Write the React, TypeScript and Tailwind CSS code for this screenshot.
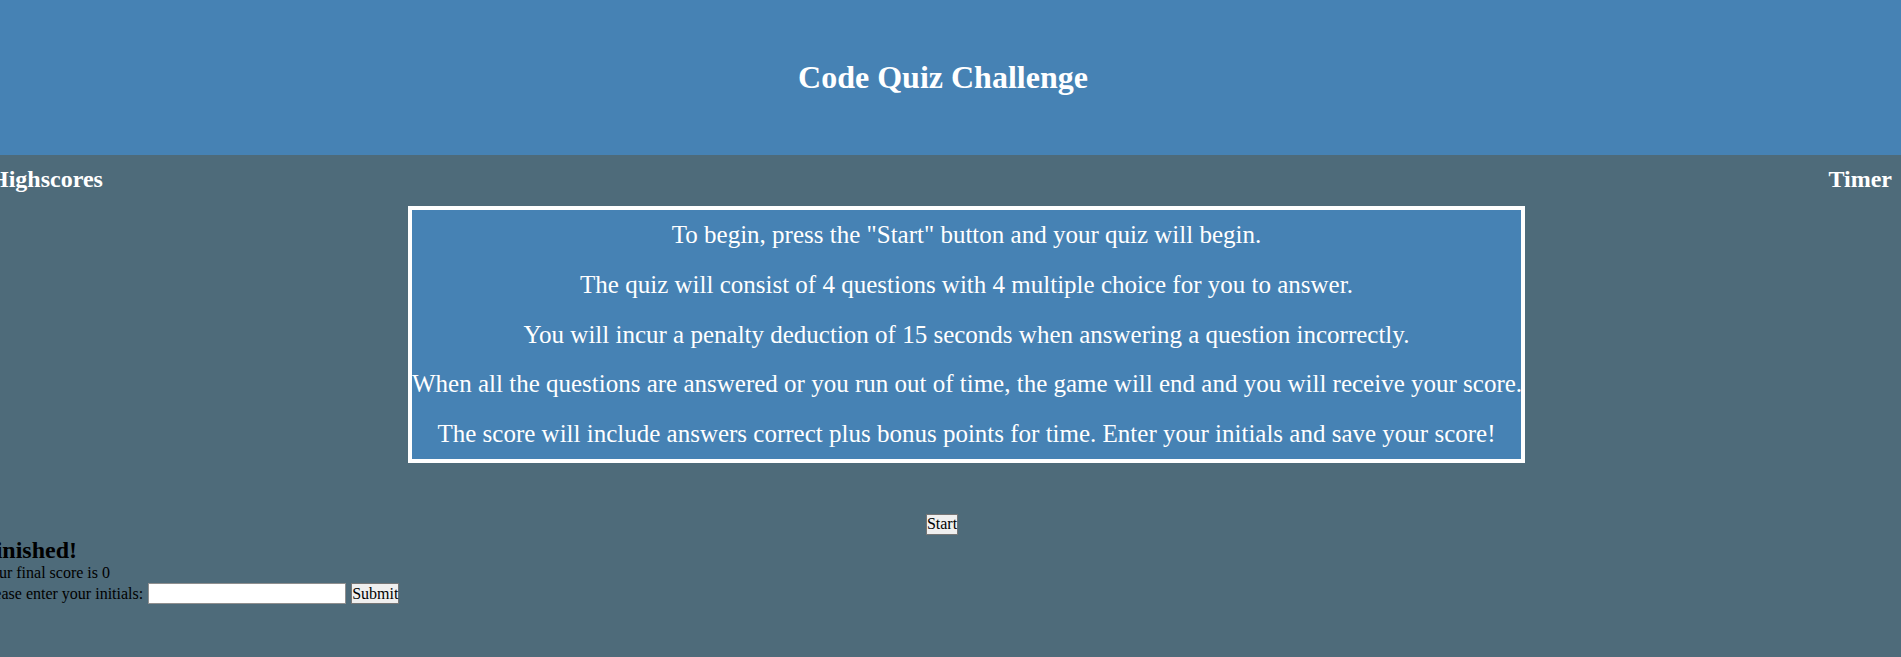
import React from "react";

export default function App() {
  const lines = [
    'To begin, press the "Start" button and your quiz will begin.',
    "The quiz will consist of 4 questions with 4 multiple choice for you to answer.",
    "You will incur a penalty deduction of 15 seconds when answering a question incorrectly.",
    "When all the questions are answered or you run out of time, the game will end and you will receive your score.",
    "The score will include answers correct plus bonus points for time. Enter your initials and save your score!",
  ];
  return (
    <div className="min-h-screen w-full overflow-hidden bg-[#4e6b7a] font-['Liberation_Serif','Times_New_Roman',serif] text-black">
      <header className="flex h-[155px] items-center justify-center bg-[#4682b4] pr-[15px]">
        <h1 className="text-[32px] font-bold leading-[37px] text-white">Code Quiz Challenge</h1>
      </header>

      <nav className="-ml-[10px] mr-[9px] mt-[10px] flex justify-between text-[24px] font-bold leading-[28px] text-white">
        <span>Highscores</span>
        <span>Timer</span>
      </nav>

      <section className="ml-[408px] mt-[13px] w-[1117px] border-4 border-white bg-[#4682b4] text-center text-[25px] text-white">
        {lines.map((l) => (
          <p key={l} className="h-[49.8px] whitespace-nowrap leading-[49.8px]">
            {l}
          </p>
        ))}
      </section>

      <div className="mt-[51px] flex justify-center pr-[17px]">
        <button className="h-[21px] border border-[#767676] bg-[#efefef] px-0 text-[16px] leading-[18px] text-black">
          Start
        </button>
      </div>

      <div className="-ml-[19px] mt-[1px]">
        <h2 className="text-[24px] font-bold leading-[28px]">Finished!</h2>
        <p className="text-[16px] leading-[18px]">Your final score is 0</p>
        <div className="flex h-[24px] items-center text-[16px] leading-[18px]">
          <span className="whitespace-nowrap">Please enter your initials:</span>
          <input
            type="text"
            className="ml-[5px] h-[21px] w-[198px] border border-[#8f8f8f] bg-white px-[2px] text-[13px]"
          />
          <button className="ml-[5px] h-[21px] border border-[#767676] bg-[#efefef] px-0 text-[16px] leading-[18px] text-black">
            Submit
          </button>
        </div>
      </div>
    </div>
  );
}
